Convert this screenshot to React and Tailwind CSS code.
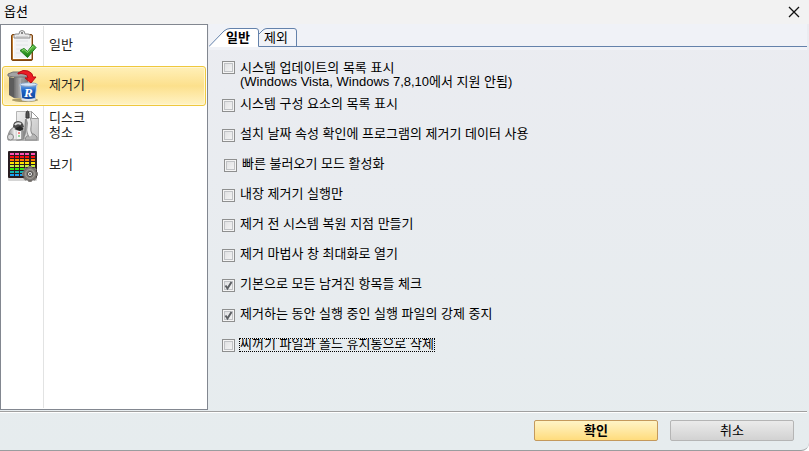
import { useState } from 'react'

function ClipboardIcon() {
  return (
    <svg width="32" height="34" viewBox="0 0 32 34" className="shrink-0" aria-hidden="true">
      <defs>
        <linearGradient id="board" x1="0" y1="0" x2="1" y2="1">
          <stop offset="0" stopColor="#cf8a3a" />
          <stop offset="1" stopColor="#8a4a0c" />
        </linearGradient>
        <linearGradient id="tick" x1="0" y1="0" x2="0" y2="1">
          <stop offset="0" stopColor="#6cc94c" />
          <stop offset="1" stopColor="#157a12" />
        </linearGradient>
      </defs>
      <rect x="4.5" y="5.5" width="21" height="26" rx="1.5" fill="url(#board)" stroke="#7d4510" />
      <rect x="6.5" y="7" width="17.5" height="22.5" fill="#f2f3f5" stroke="#fff" />
      <path d="M9 12h12M9 16h12M9 20h7M9 24h5" stroke="#e2e4e8" />
      <path d="M7 9V6.5q0-1.500 2-1.500h3q0-3.500 3-3.500t3 3.500h3q2 0 2 1.500V9z" fill="#e9e9e9" stroke="#8a8a8a" />
      <circle cx="15" cy="4" r="1" fill="#666" />
      <path d="M9 8h12" stroke="#b5b5b5" />
      <path d="M13 21.500l4-2 3.500 3L26 15.500l3 3-8.500 10z" fill="url(#tick)" stroke="#1b7b1b" />
      <path d="M15 21.500l2-1 3.500 3 5.500-6.500" fill="none" stroke="#93df76" />
    </svg>
  )
}

function UninstallIcon() {
  return (
    <svg width="32" height="34" viewBox="0 0 32 34" className="shrink-0" aria-hidden="true">
      <defs>
        <linearGradient id="box" x1="0" y1="0" x2="1" y2="0">
          <stop offset="0" stopColor="#6a6a6a" />
          <stop offset="0.45" stopColor="#b0b0b0" />
          <stop offset="1" stopColor="#707070" />
        </linearGradient>
        <linearGradient id="bin" x1="0" y1="0" x2="0" y2="1">
          <stop offset="0" stopColor="#7cb1ee" />
          <stop offset="0.4" stopColor="#1b61c4" />
          <stop offset="1" stopColor="#0b3e91" />
        </linearGradient>
      </defs>
      <ellipse cx="18" cy="31" rx="13" ry="2" fill="#5b4b1c" opacity="0.5" />
      <path d="M2 8l5 1v20l-5-3z" fill="#5c5c5c" />
      <path d="M7 8h14v21H7z" fill="url(#box)" />
      <path d="M1 5l5-2h16l1 5H7l-6-1z" fill="#a3a3a3" stroke="#747474" />
      <path d="M10 10v18M15 10v18" stroke="#8b8b8b" />
      <path d="M13 15h17l-2 16q-6 2-13 0z" fill="url(#bin)" stroke="#c9d4e0" />
      <ellipse cx="21.500" cy="15.500" rx="8.500" ry="1.800" fill="#d6e7fa" stroke="#8ca4c0" />
      <path d="M15 30q6 2 13 0" fill="none" stroke="#e2e5e8" strokeWidth="2" />
      <text x="17" y="28" fontFamily="Liberation Serif, serif" fontSize="13" fontWeight="bold" fontStyle="italic" fill="#fff">R</text>
      <path d="M11 4q5-4 10-2 5 2 5 6h3l-5 6-6-5h3q0-4-4-4-3-1-6 0z" fill="#ed1c24" stroke="#b80d14" />
    </svg>
  )
}

function VacuumIcon() {
  return (
    <svg width="34" height="34" viewBox="0 0 34 34" className="-mx-px shrink-0" aria-hidden="true">
      <defs>
        <linearGradient id="paper" x1="0" y1="0" x2="1" y2="1">
          <stop offset="0" stopColor="#f0f0f0" />
          <stop offset="1" stopColor="#c2c2c2" />
        </linearGradient>
        <linearGradient id="vac" x1="0" y1="0" x2="1" y2="0">
          <stop offset="0" stopColor="#8a8a8a" />
          <stop offset="0.4" stopColor="#eee" />
          <stop offset="1" stopColor="#858585" />
        </linearGradient>
      </defs>
      <path d="M10.500 2.500h15l7 7v22h-22z" fill="url(#paper)" stroke="#b4b4b4" />
      <path d="M25.500 2.500v7h7z" fill="#fff" stroke="#999" />
      <path d="M19 31l1-3 4-3h4l3 3v3z" fill="#b4b4b4" stroke="#8c8c8c" />
      <path d="M20 10l-1 13q0 4-4 5" fill="none" stroke="#8a8a8a" strokeWidth="2" />
      <path d="M22 9q2 4 1 9t2 9" fill="none" stroke="#8f8f8f" strokeWidth="5" />
      <path d="M22 9q2 4 1 9t2 9" fill="none" stroke="#eee" strokeWidth="3" />
      <path d="M20 9V5q0-3 1.500-3T23 5v4z" fill="#555" stroke="#343434" />
      <path d="M2 29q0-8 6-11l8 1q3 5 2 11l-5 1H2z" fill="url(#vac)" stroke="#888" />
      <path d="M7 18q0-6 5-6t6 6l-5 3z" fill="#4a4a4a" />
      <path d="M9 16q2-3 6-1" fill="none" stroke="#ddd" strokeWidth="2" />
      <path d="M8 20l6-3 4 3-4 2z" fill="#292929" />
      <circle cx="4.500" cy="28" r="3" fill="#d8d8d8" stroke="#888" />
      <path d="M11 22h4v8h-4z" fill="#f5f5f5" />
      <path d="M12 24h2" stroke="#e22" strokeWidth="1" />
      <path d="M12 27h2" stroke="#37b24a" />
    </svg>
  )
}

const gridRows = ['#ff52b5', '#fb0d0d', '#ff7b00', '#ffe600', '#c9f23c', '#33e90a', '#12b5b0', '#1aa2f5']
const gearTeeth = [0, 45, 90, 135, 180, 225, 270, 315]

function ViewIcon() {
  return (
    <svg width="32" height="34" viewBox="0 0 32 34" className="shrink-0" aria-hidden="true">
      <rect x="1" y="27" width="29" height="5" rx="1" fill="#d5d5d5" />
      <rect x="1" y="2" width="29" height="27" rx="1" fill="#281c20" />
      {gridRows.map((color, row) => (
        <g key={color} fill={color}>
          {[3, 8, 13, 18, 24].map(x => (
            <rect key={x} x={x} y={4 + row * 3} width="4" height="2" />
          ))}
        </g>
      ))}
      <g fill="#827e7a">
        {gearTeeth.map(angle => (
          <rect key={angle} x="21" y="17" width="4" height="4" rx="1" transform={`rotate(${angle} 23 25)`} />
        ))}
        <circle cx="23" cy="25" r="6.500" stroke="#6d6966" />
      </g>
      <circle cx="23" cy="25" r="4.500" fill="none" stroke="#a09b96" />
      <circle cx="23" cy="25" r="2.500" fill="#f2f2f2" stroke="#45413f" />
      <circle cx="23" cy="25" r="1" fill="#555" />
    </svg>
  )
}

const sections = [
  { id: 'general', lines: ['일반'], Icon: ClipboardIcon },
  { id: 'uninstaller', lines: ['제거기'], Icon: UninstallIcon },
  { id: 'disk', lines: ['디스크', '청소'], Icon: VacuumIcon },
  { id: 'view', lines: ['보기'], Icon: ViewIcon },
]

const options = [
  { id: 'components', text: '시스템 구성 요소의 목록 표시' },
  { id: 'date', text: '설치 날짜 속성 확인에 프로그램의 제거기 데이터 사용' },
  { id: 'fast', text: '빠른 불러오기 모드 활성화', indent: true },
  { id: 'builtin', text: '내장 제거기 실행만' },
  { id: 'restore', text: '제거 전 시스템 복원 지점 만들기' },
  { id: 'maximize', text: '제거 마법사 창 최대화로 열기' },
  { id: 'leftovers', text: '기본으로 모든 남겨진 항목들 체크', checked: true },
  { id: 'kill', text: '제거하는 동안 실행 중인 실행 파일의 강제 중지', checked: true },
]

function CheckBox({ id, defaultChecked = false }) {
  const [checked, setChecked] = useState(defaultChecked)
  return (
    <span className="relative size-[13px] shrink-0">
      <input
        id={id}
        type="checkbox"
        checked={checked}
        onChange={e => setChecked(e.target.checked)}
        className="block size-[13px] appearance-none border border-[#8e8f8f] bg-linear-to-br from-[#dcdddf] to-[#f8f8f8] shadow-[inset_0_0_0_1px_#f4f4f4,inset_0_0_0_2px_#c0c2c5]"
      />
      {checked && (
        <svg width="13" height="13" viewBox="0 0 13 13" className="pointer-events-none absolute inset-0" aria-hidden="true">
          <path d="M3.500 6.500l2 3 4-6.500" fill="none" stroke="#5c5f63" strokeWidth="2" />
        </svg>
      )}
    </span>
  )
}

function Sidebar({ active, onSelect }) {
  return (
    <nav className="relative w-[208px] shrink-0 border border-[#828790] bg-white p-px">
      <div className="absolute inset-y-px left-[42px] w-px bg-[#e2e3e3]" />
      {sections.map(({ id, lines, Icon }) => (
        <button
          key={id}
          onClick={() => onSelect(id)}
          className={
            active === id
              ? 'relative flex h-10 w-full items-center gap-[10px] rounded-[3px] border border-[#efc83d] bg-linear-to-b from-[#fff0b8] via-[#fce08c] to-[#fff3c4] px-1 text-left shadow-[inset_0_0_0_1px_#fff6d4]'
              : 'relative flex h-10 w-full items-center gap-[10px] rounded-[3px] border border-transparent px-1 text-left'
          }
        >
          <Icon />
          <span className="pb-[3px] leading-[15px] text-[#222]">
            {lines.map(line => (
              <span key={line} className="block">{line}</span>
            ))}
          </span>
        </button>
      ))}
    </nav>
  )
}

function Tabs() {
  return (
    <div role="tablist" className="flex h-[23px] items-end border-b border-[#6482ab] bg-[#f0f2f7]">
      <button role="tab" aria-selected="true" className="relative -mb-px h-[19px] w-[50px] pl-[17px] text-left leading-[17px] font-bold">
        <svg width="50" height="19" viewBox="0 0 50 19" className="absolute inset-0" aria-hidden="true">
          <path d="M0 18.500L15 3q3-2.500 6-2.500h26q2.500 0 2.500 2.500v16H0z" fill="#fff" />
          <path d="M0 18.500L15 3q3-2.500 6-2.500h26q2.500 0 2.500 2.500v15.500" fill="none" stroke="#6482ab" />
        </svg>
        <span className="relative">일반</span>
      </button>
      <button role="tab" aria-selected="false" className="relative h-[18px] w-[38px] pl-[5px] text-left leading-[17px]">
        <svg width="38" height="18" viewBox="0 0 38 18" className="absolute inset-0" aria-hidden="true">
          <path d="M0 6l4-4q2-1.500 4-1.500h27q2.500 0 2.500 2.500v15" fill="#f3f5fa" stroke="#6482ab" />
        </svg>
        <span className="relative">제외</span>
      </button>
    </div>
  )
}

export default function App() {
  const [section, setSection] = useState('uninstaller')

  return (
    <div className="flex min-h-screen flex-col overflow-hidden rounded-br-lg border-b border-[#9a9d9f] bg-linear-to-b from-[#ebecf1] to-[#e6ecee] font-['Liberation_Sans','Noto_Sans_CJK_KR',sans-serif] text-[13px] text-black">
      <header className="flex h-6 items-center justify-between bg-[#f2f2f2] pr-[9px] pb-px pl-1">
        <h1 className="leading-4">옵션</h1>
        <button aria-label="닫기">
          <svg width="12" height="12" viewBox="0 0 12 12" aria-hidden="true">
            <path d="M1 1l10 10M11 1L1 11" stroke="#111" strokeWidth="1.300" />
          </svg>
        </button>
      </header>

      <div className="flex flex-1">
        <Sidebar active={section} onSelect={setSection} />
        <main className="mr-[2px] ml-px flex-1">
          <Tabs />
          <div className="flex flex-col border-t-[3px] border-[#f0f2f7] pt-[11px] pl-[13px] leading-[14px]">
            <div className="flex h-[29px] items-start gap-[5px]">
              <CheckBox id="updates" />
              <label htmlFor="updates">
                시스템 업데이트의 목록 표시
                <br />
                (Windows Vista, Windows 7,8,10에서 지원 안됨)
              </label>
            </div>
            {options.map(({ id, text, checked, indent }) => (
              <div key={id} className={indent ? 'flex h-[30px] items-center gap-[5px] pl-[2px]' : 'flex h-[30px] items-center gap-[5px]'}>
                <CheckBox id={id} defaultChecked={checked} />
                <label htmlFor={id} className="pb-[2px]">{text}</label>
              </div>
            ))}
            <div className="flex h-[30px] items-center gap-1">
              <CheckBox id="recycle" />
              <label htmlFor="recycle" className="h-[14px] overflow-hidden border border-dotted border-black leading-[10px]">
                찌꺼기 파일과 폴드 휴지통으로 삭제
              </label>
            </div>
          </div>
        </main>
      </div>

      <footer className="mt-px mr-[2px] flex justify-end gap-3 border-t border-[#a0a0a0] pt-2 pr-[13px] pb-[9px] shadow-[inset_0_1px_0_#fff]">
        <button className="h-[21px] w-[124px] rounded-[2px] border border-[#c4995c] bg-linear-to-b from-[#fff4c6] to-[#ffdc7c] pb-px leading-[17px] font-bold">확인</button>
        <button className="h-[21px] w-[124px] rounded-[2px] border border-[#b5b5b5] bg-linear-to-b from-[#ebebeb] to-[#d2d2d2] pb-px leading-[17px]">취소</button>
      </footer>
    </div>
  )
}
